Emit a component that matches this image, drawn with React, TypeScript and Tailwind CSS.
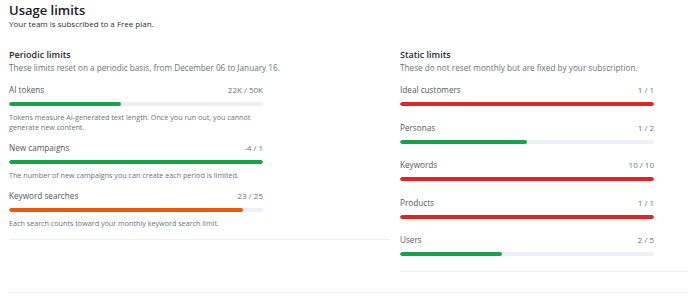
import React from "react";

interface Limit {
  label: string;
  used: number;
  max: number;
  value: string;
  color: string;
  note?: string;
}

const PERIODIC: Limit[] = [
  {
    label: "AI tokens",
    used: 22,
    max: 50,
    value: "22K / 50K",
    color: "bg-[#16a34a]",
    note: "Tokens measure AI-generated text length. Once you run out, you cannot generate new content.",
  },
  {
    label: "New campaigns",
    used: 1,
    max: 1,
    value: "-4 / 1",
    color: "bg-[#16a34a]",
    note: "The number of new campaigns you can create each period is limited.",
  },
  {
    label: "Keyword searches",
    used: 23,
    max: 25,
    value: "23 / 25",
    color: "bg-[#ea580c]",
    note: "Each search counts toward your monthly keyword search limit.",
  },
];

const STATIC: Limit[] = [
  { label: "Ideal customers", used: 1, max: 1, value: "1 / 1", color: "bg-[#dc2626]" },
  { label: "Personas", used: 1, max: 2, value: "1 / 2", color: "bg-[#16a34a]" },
  { label: "Keywords", used: 10, max: 10, value: "10 / 10", color: "bg-[#dc2626]" },
  { label: "Products", used: 1, max: 1, value: "1 / 1", color: "bg-[#dc2626]" },
  { label: "Users", used: 2, max: 5, value: "2 / 5", color: "bg-[#16a34a]" },
];

function LimitRow({ item }: { item: Limit }) {
  const pct = Math.min(100, Math.max(0, (item.used / item.max) * 100));
  return (
    <div className="w-2/3">
      <div className="flex items-center justify-between h-3 leading-3">
        <span className="text-[8.2px] font-medium text-[#52575f]">{item.label}</span>
        <span className="text-[8px] text-[#6b7280]">{item.value}</span>
      </div>
      <div className="mt-[6px] h-1 rounded-full bg-[#edf1f7] overflow-hidden">
        <div className={`h-full rounded-full ${item.color}`} style={{ width: `${pct}%` }} />
      </div>
      {item.note && (
        <p className="mt-[6px] text-[7.2px] leading-[10px] text-[#6b7280]">{item.note}</p>
      )}
    </div>
  );
}

export default function App() {
  return (
    <div
      className="w-[688px] h-[297px] overflow-hidden bg-white"
      style={{ fontFamily: "'Open Sans', sans-serif" }}
    >
      <div className="w-[781px] pl-[9px]">
        {/* Header */}
        <div className="pt-[3px]">
          <h1 className="text-[13px] leading-[15px] font-semibold text-[#1a1a1a]">Usage limits</h1>
          <p className="text-[8px] leading-3 text-[#2b2f36]">
            Your team is subscribed to a Free plan.
          </p>
        </div>

        <div className="mt-[18px] grid grid-cols-2 gap-[10px] items-start">
          {/* Periodic */}
          <section className="border-b border-[#eef0f3] pb-[11px]">
            <h2 className="text-[9px] leading-[14px] font-semibold text-[#1f2937]">Periodic limits</h2>
            <p className="text-[8.2px] leading-[11px] text-[#6b7280]">
              These limits reset on a periodic basis, from December 06 to January 16.
            </p>
            <div className="mt-[11px] flex flex-col gap-[10px]">
              {PERIODIC.map((l) => (
                <LimitRow key={l.label} item={l} />
              ))}
            </div>
          </section>

          {/* Static */}
          <section className="border-b border-[#eef0f3] pb-[15px]">
            <h2 className="text-[9px] leading-[14px] font-semibold text-[#1f2937]">Static limits</h2>
            <p className="text-[8.2px] leading-[11px] text-[#6b7280]">
              These do not reset monthly but are fixed by your subscription.
            </p>
            <div className="mt-[11px] flex flex-col gap-[15.5px]">
              {STATIC.map((l) => (
                <LimitRow key={l.label} item={l} />
              ))}
            </div>
          </section>
        </div>

        <div className="mt-[20px] border-b border-[#eef0f3]" />
      </div>
    </div>
  );
}
